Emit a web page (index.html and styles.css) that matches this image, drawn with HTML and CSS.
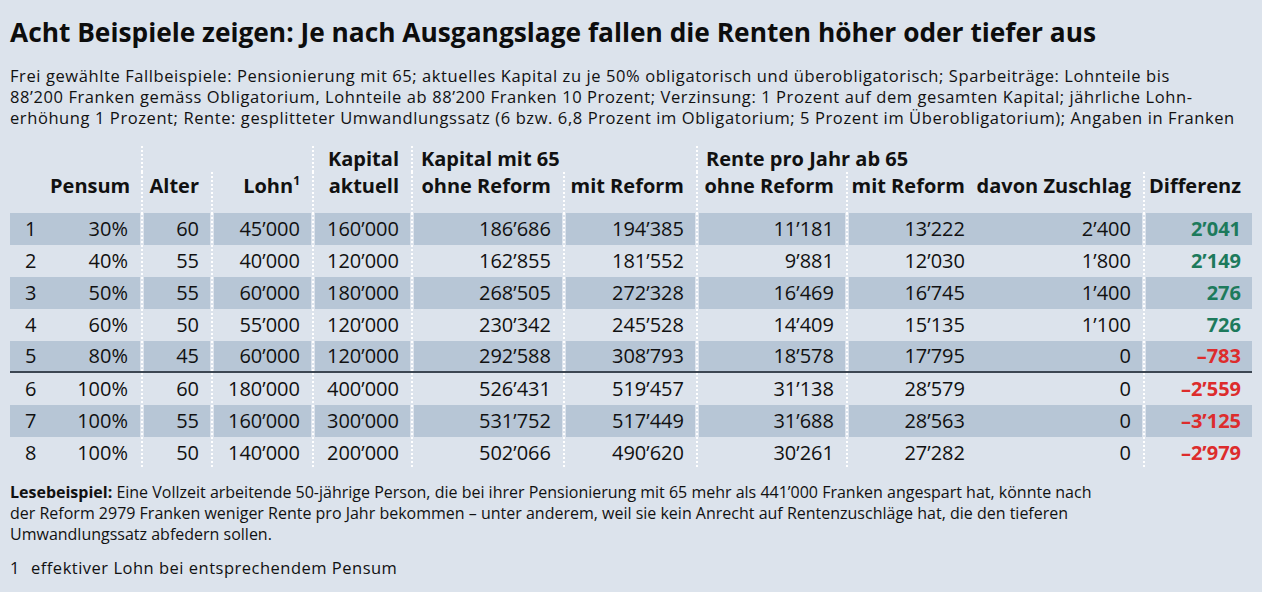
FILE: index.html
```html
<!DOCTYPE html>
<html lang="de">
<head>
<meta charset="utf-8">
<title>Acht Beispiele</title>
<link rel="stylesheet" href="styles.css">
</head>
<body>
<h1 class="title">Acht Beispiele zeigen: Je nach Ausgangslage fallen die Renten höher oder tiefer aus</h1>
<p class="intro">Frei gewählte Fallbeispiele: Pensionierung mit 65; aktuelles Kapital zu je 50% obligatorisch und überobligatorisch; Sparbeiträge: Lohnteile bis<br>88’200 Franken gemäss Obligatorium, Lohnteile ab 88’200 Franken 10 Prozent; Verzinsung: 1 Prozent auf dem gesamten Kapital; jährliche Lohn-<br>erhöhung 1 Prozent; Rente: gesplitteter Umwandlungssatz (6 bzw. 6,8 Prozent im Obligatorium; 5 Prozent im Überobligatorium); Angaben in Franken</p>

<div class="table">
  <div class="row head-a">
    <div class="c span2"></div>
    <div class="c span2 sep"></div>
    <div class="c sep r">Kapital</div>
    <div class="c span2 sep l">Kapital mit 65</div>
    <div class="c span3 sep l">Rente pro Jahr ab 65</div>
    <div class="c"></div>
  </div>
  <div class="row head-b">
    <div class="c"></div>
    <div class="c">Pensum</div>
    <div class="c">Alter</div>
    <div class="c">Lohn<sup>1</sup></div>
    <div class="c">aktuell</div>
    <div class="c">ohne Reform</div>
    <div class="c">mit Reform</div>
    <div class="c">ohne Reform</div>
    <div class="c">mit Reform</div>
    <div class="c">davon Zuschlag</div>
    <div class="c">Differenz</div>
  </div>

  <div class="row data shade">
    <div class="c">1</div><div class="c">30%</div><div class="c">60</div><div class="c">45’000</div><div class="c">160’000</div><div class="c">186’686</div><div class="c">194’385</div><div class="c">11’181</div><div class="c">13’222</div><div class="c">2’400</div><div class="c pos">2’041</div>
  </div>
  <div class="row data">
    <div class="c">2</div><div class="c">40%</div><div class="c">55</div><div class="c">40’000</div><div class="c">120’000</div><div class="c">162’855</div><div class="c">181’552</div><div class="c">9’881</div><div class="c">12’030</div><div class="c">1’800</div><div class="c pos">2’149</div>
  </div>
  <div class="row data shade">
    <div class="c">3</div><div class="c">50%</div><div class="c">55</div><div class="c">60’000</div><div class="c">180’000</div><div class="c">268’505</div><div class="c">272’328</div><div class="c">16’469</div><div class="c">16’745</div><div class="c">1’400</div><div class="c pos">276</div>
  </div>
  <div class="row data">
    <div class="c">4</div><div class="c">60%</div><div class="c">50</div><div class="c">55’000</div><div class="c">120’000</div><div class="c">230’342</div><div class="c">245’528</div><div class="c">14’409</div><div class="c">15’135</div><div class="c">1’100</div><div class="c pos">726</div>
  </div>
  <div class="row data shade divider">
    <div class="c">5</div><div class="c">80%</div><div class="c">45</div><div class="c">60’000</div><div class="c">120’000</div><div class="c">292’588</div><div class="c">308’793</div><div class="c">18’578</div><div class="c">17’795</div><div class="c">0</div><div class="c neg">–783</div>
  </div>
  <div class="row data">
    <div class="c">6</div><div class="c">100%</div><div class="c">60</div><div class="c">180’000</div><div class="c">400’000</div><div class="c">526’431</div><div class="c">519’457</div><div class="c">31’138</div><div class="c">28’579</div><div class="c">0</div><div class="c neg">–2’559</div>
  </div>
  <div class="row data shade">
    <div class="c">7</div><div class="c">100%</div><div class="c">55</div><div class="c">160’000</div><div class="c">300’000</div><div class="c">531’752</div><div class="c">517’449</div><div class="c">31’688</div><div class="c">28’563</div><div class="c">0</div><div class="c neg">–3’125</div>
  </div>
  <div class="row data">
    <div class="c">8</div><div class="c">100%</div><div class="c">50</div><div class="c">140’000</div><div class="c">200’000</div><div class="c">502’066</div><div class="c">490’620</div><div class="c">30’261</div><div class="c">27’282</div><div class="c">0</div><div class="c neg">–2’979</div>
  </div>
</div>

<p class="reading"><b>Lesebeispiel:</b> Eine Vollzeit arbeitende 50-jährige Person, die bei ihrer Pensionierung mit 65 mehr als 441’000 Franken angespart hat, könnte nach<br>der Reform 2979 Franken weniger Rente pro Jahr bekommen – unter anderem, weil sie kein Anrecht auf Rentenzuschläge hat, die den tieferen<br>Umwandlungssatz abfedern sollen.</p>
<p class="footnote"><span class="fn-num">1</span>effektiver Lohn bei entsprechendem Pensum</p>
</body>
</html>
```

FILE: styles.css
```css
html, body {
  margin: 0;
  padding: 0;
}
body {
  background: #dce3ec;
  color: #111;
  font-family: "Open Sans", "Noto Sans", sans-serif;
  padding: 16px 10px 0 10px;
  width: 1262px;
  box-sizing: border-box;
  overflow: hidden;
}
.title {
  margin: 0;
  font-size: 26.3px;
  line-height: 32px;
  font-weight: 700;
  color: #0d0d0d;
}
.intro {
  margin: 17px 0 0 0;
  font-size: 16.5px;
  line-height: 21px;
  letter-spacing: 0.59px;
}
.table {
  margin-top: 18px;
  width: 1242px;
}
.row {
  display: grid;
  grid-template-columns: 40px 90px 70px 101px 99px 152px 133px 150px 131px 166px 110px;
  --bg: transparent;
}
.row.shade { --bg: #b7c6d6; }
.c {
  box-sizing: border-box;
  padding-right: 11px;
  text-align: right;
  white-space: nowrap;
  background: linear-gradient(var(--bg), var(--bg));
}
.row > .c:nth-child(2) { padding-right: 12px; }
.span2 { grid-column: span 2; }
.span3 { grid-column: span 3; }
.head-a > .c:nth-child(2) { padding-right: 11px; }
.c.l { text-align: left; padding-left: 7px; }
.head-a .c, .head-b .c {
  font-weight: 700;
  font-size: 20px;
}
.head-a { height: 26px; }
.head-a .c { line-height: 26px; }
.head-b { height: 41px; }
.head-b .c { line-height: 28px; }
.head-b sup {
  font-size: 12px;
  line-height: 0;
  vertical-align: 8px;
}
.data .c {
  font-size: 20px;
  line-height: 32px;
  height: 32px;
}
.data .c:first-child {
  text-align: left;
  padding-left: 15px;
}
.data.divider {
  border-bottom: 2px solid #3c4652;
}
.data.divider .c { height: 30px; line-height: 30px; }

/* dotted separators */
.sep,
.head-b .c:nth-child(n+3):not(:nth-child(10)),
.data .c:nth-child(n+3):not(:nth-child(10)) {
  border-left: 4px solid transparent;
  background:
    linear-gradient(#fff 50%, transparent 0) 1px 0 / 2px 4px repeat-y border-box,
    linear-gradient(var(--bg), var(--bg)) padding-box;
}
.pos { color: #1d7a5c; font-weight: 700; }
.neg { color: #dd2c2c; font-weight: 700; }

.reading {
  margin: 13px 0 0 0;
  font-size: 16px;
  line-height: 21px;
}
.footnote {
  margin: 12px 0 0 0;
  font-size: 16.5px;
  line-height: 21px;
  letter-spacing: 0.5px;
}
.fn-num { display: inline-block; width: 21px; }
```
